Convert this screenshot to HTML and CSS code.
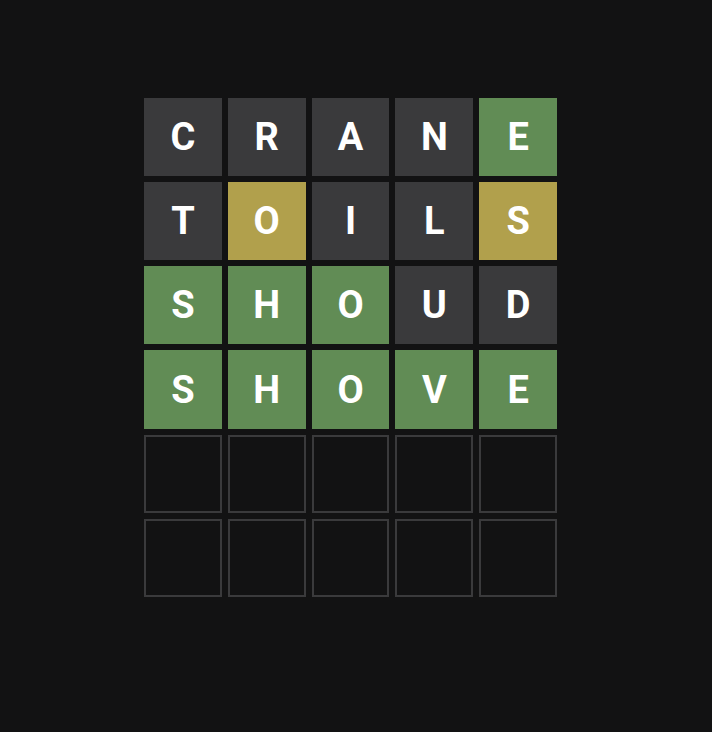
FILE: index.html
```html
<!DOCTYPE html>
<html lang="en">
<head>
<meta charset="utf-8">
<title>Wordle</title>
<link rel="stylesheet" href="styles.css">
</head>
<body>
<main class="board">
  <div class="tile absent">C</div><div class="tile absent">R</div><div class="tile absent">A</div><div class="tile absent">N</div><div class="tile correct">E</div>
  <div class="tile absent">T</div><div class="tile present">O</div><div class="tile absent">I</div><div class="tile absent">L</div><div class="tile present">S</div>
  <div class="tile correct">S</div><div class="tile correct">H</div><div class="tile correct">O</div><div class="tile absent">U</div><div class="tile absent">D</div>
  <div class="tile correct">S</div><div class="tile correct">H</div><div class="tile correct">O</div><div class="tile correct">V</div><div class="tile correct">E</div>
  <div class="tile empty"></div><div class="tile empty"></div><div class="tile empty"></div><div class="tile empty"></div><div class="tile empty"></div>
  <div class="tile empty"></div><div class="tile empty"></div><div class="tile empty"></div><div class="tile empty"></div><div class="tile empty"></div>
</main>
</body>
</html>
```
FILE: styles.css
```css
html, body {
  margin: 0;
  padding: 0;
  background: #121213;
}
body {
  padding: 98px 0 0 144px;
  height: 732px;
  box-sizing: border-box;
}
.board {
  width: 413px;
  height: 499px;
  display: grid;
  grid-template-columns: repeat(5, 1fr);
  grid-template-rows: repeat(6, 1fr);
  gap: 6px;
}
.tile {
  display: flex;
  align-items: center;
  justify-content: center;
  font-family: Roboto, "Liberation Sans", Arial, sans-serif;
  font-weight: 700;
  font-size: 38px;
  color: #ffffff;
  text-transform: uppercase;
  box-sizing: border-box;
}
.absent { background: #3a3a3c; }
.correct { background: #618c55; }
.present { background: #b1a04c; }
.empty { border: 2px solid #3a3a3c; }
```
